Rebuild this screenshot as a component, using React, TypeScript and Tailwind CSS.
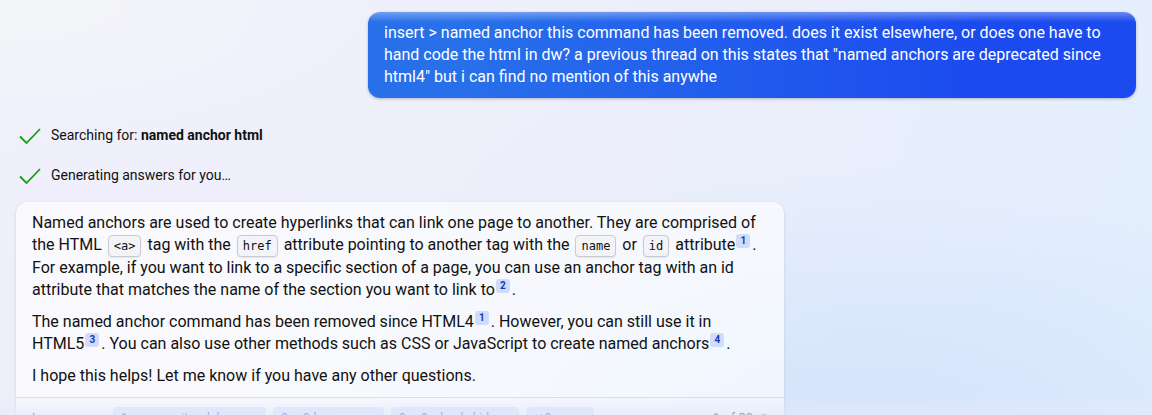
import type { ReactNode } from "react";

const SOURCES = [
  { n: 1, label: "community.adobe.com", width: "w-[153px]" },
  { n: 2, label: "w3docs.com", width: "w-[111px]" },
  { n: 3, label: "w3schools.bid", width: "w-[128px]" },
];

function Code({ children }: { children: ReactNode }) {
  return (
    <code className="mx-0.5 inline-block rounded border border-[#c9cbd3] bg-[#f2f4f8] px-[5px] align-middle font-['DejaVu_Sans_Mono','Liberation_Mono',monospace] text-[12px] leading-5 shadow-[0_1px_1px_rgba(0,0,0,0.08)]">
      {children}
    </code>
  );
}

function Cite({ n }: { n: number }) {
  return (
    <a
      href={`#source-${n}`}
      className="relative -top-1.5 mr-0.5 ml-px inline-block h-3.5 w-3.5 rounded-[3px] bg-[#d1dbfa] text-center align-baseline text-[10px] leading-[13px] font-bold text-[#123bb6]"
    >
      {n}
    </a>
  );
}

function Status({ children }: { children: ReactNode }) {
  return (
    <li className="flex h-5 items-center gap-2.5 text-sm">
      <svg viewBox="0 0 22 16" className="mt-0.5 h-4 w-[22px]" fill="none" stroke="#13a10e" strokeWidth="1.8" aria-hidden="true">
        <path d="M1 8.5 7.5 15 21 1" />
      </svg>
      <span>{children}</span>
    </li>
  );
}

export default function App() {
  return (
    <main className="relative h-screen overflow-hidden bg-[radial-gradient(ellipse_at_top_left,#f5f6f8_0%,rgba(240,241,251,0.6)_22%,transparent_45%),radial-gradient(ellipse_at_75%_110%,#d0e2fc_0%,transparent_45%),linear-gradient(110deg,#efeffb_0%,#ebeefa_55%,#e3effd_100%)] px-4 pt-3 font-[Roboto,sans-serif] text-[#111]">
      <section className="ml-auto w-full max-w-[768px] rounded-xl bg-[linear-gradient(180deg,rgba(255,255,255,0.35)_0,transparent_10px),linear-gradient(90deg,#2870ea_0%,#2870ea_12%,#1b4aef_80%)] px-4 pt-[10px] pb-[10px] text-base leading-[22px] text-white shadow-[0_1px_3px_rgba(0,0,0,0.25)]">
        <p>
          insert &gt; named anchor this command has been removed. does it exist elsewhere, or does one have to hand code the html in dw? a previous thread on this states that "named anchors are deprecated since html4" but i can find no mention of this anywhe
        </p>
      </section>

      <ul className="mt-[27px] flex flex-col gap-5 pl-[3px]">
        <Status>
          Searching for: <strong>named anchor html</strong>
        </Status>
        <Status>Generating answers for you…</Status>
      </ul>

      <article className="mt-[17px] w-full max-w-[768px] rounded-xl bg-white/65 shadow-[0_1px_3px_rgba(0,0,0,0.14)]">
        <div className="flex flex-col gap-2.5 px-4 pt-[10px] pb-[10px] text-base leading-[22px]">
          <p>
            Named anchors are used to create hyperlinks that can link one page to another. They are comprised of the HTML <Code>&lt;a&gt;</Code> tag with the <Code>href</Code> attribute pointing to another tag with the <Code>name</Code> or <Code>id</Code> attribute
            <Cite n={1} />. For example, if you want to link to a specific section of a page, you can use an anchor tag with an id attribute that matches the name of the section you want to link to
            <Cite n={2} />.
          </p>
          <p>
            The named anchor command has been removed since HTML4
            <Cite n={1} />. However, you can still use it in{" "}
            <span className="whitespace-nowrap">
              HTML5
              <Cite n={3} />.
            </span>{" "}
            You can also use other methods such as CSS or JavaScript to create named anchors
            <Cite n={4} />.
          </p>
          <p>I hope this helps! Let me know if you have any other questions.</p>
        </div>
        <footer className="flex items-center gap-[7px] border-t border-black/10 px-4 py-[9px] text-xs">
          <span className="w-[74px]">Learn more:</span>
          {SOURCES.map((s) => (
            <a key={s.n} href={`#source-${s.n}`} className={`${s.width} rounded bg-[#c9d5fa]/60 px-2 leading-[22px] whitespace-nowrap text-[#123bb6]`}>
              {s.n}. {s.label}
            </a>
          ))}
          <button type="button" className="w-[68px] rounded bg-[#c9d5fa]/60 px-2 text-center leading-[22px] text-[#123bb6]">
            +3 more
          </button>
          <span className="ml-auto text-[13px]">1 of 30</span>
          <span className="h-2 w-2 rounded-full bg-[#767676]" />
        </footer>
      </article>
      <div className="pointer-events-none absolute inset-x-0 bottom-0 h-5 bg-[linear-gradient(180deg,transparent,rgba(228,234,251,0.7))]" />
    </main>
  );
}
